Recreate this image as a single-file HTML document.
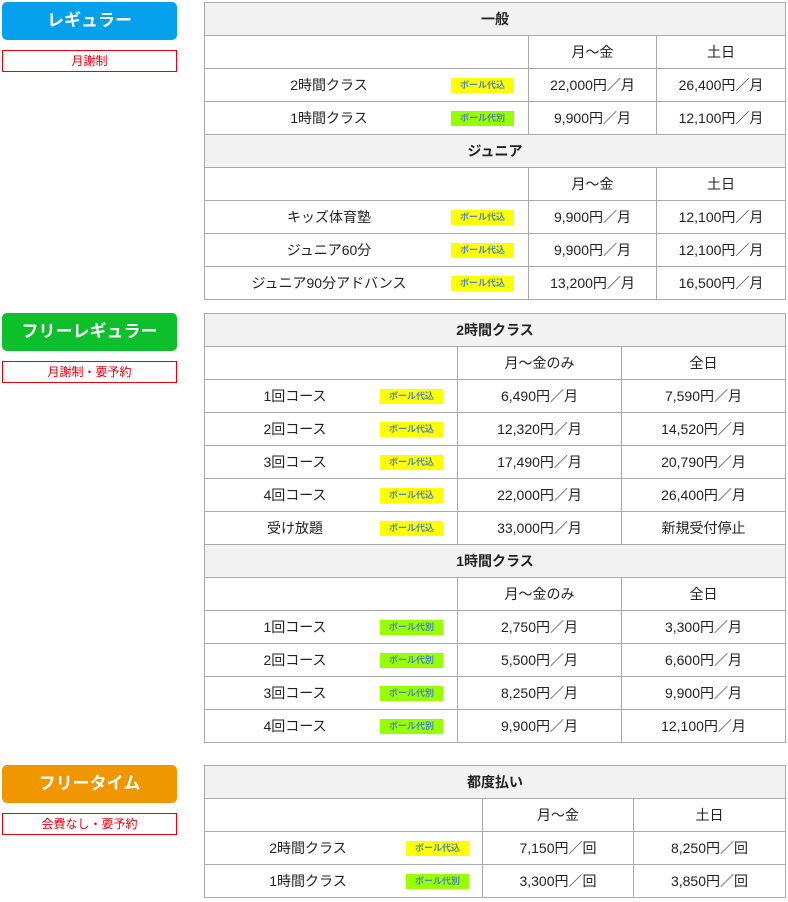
<!DOCTYPE html>
<html><head><meta charset="utf-8"><style>
body{margin:0;width:788px;height:902px;background:#fff;font-family:"Liberation Sans","Noto Sans CJK JP",sans-serif;color:#222;position:relative;overflow:hidden}
.lab{position:absolute;left:2px;width:175px;height:38px;border-radius:5px;color:#fff;font-weight:bold;font-size:17px;text-align:center;line-height:38px}
.sub{position:absolute;left:2px;width:173px;height:20px;border:1px solid #e60012;color:#e60012;font-size:12px;text-align:center;line-height:20px}
table{position:absolute;left:204px;width:582px;border-collapse:collapse;table-layout:fixed;font-size:14px}
td{border:1px solid #aaa;height:32px;padding:0;text-align:center;vertical-align:middle}
td.h{background:#f2f2f2;font-weight:bold}
td.f{position:relative}
.n{position:absolute;top:0;line-height:32px;transform:translateX(-50%);white-space:nowrap}
.b{position:absolute;top:9px;width:63px;height:15px;font-size:9px;font-weight:bold;color:#4a86c8;line-height:15px;text-align:center}
.y{background:#ffff00}.g{background:#99ff00}
</style></head><body>
<div class="lab" style="top:2px;background:#05a0ec">レギュラー</div>
<div class="sub" style="top:50px">月謝制</div>
<div class="lab" style="top:313px;background:#0cbf2b">フリーレギュラー</div>
<div class="sub" style="top:361px">月謝制・要予約</div>
<div class="lab" style="top:765px;background:#ef9600">フリータイム</div>
<div class="sub" style="top:813px">会費なし・要予約</div>

<table style="top:2px"><colgroup><col style="width:324px"><col style="width:128px"><col></colgroup>
<tr><td class="h" colspan="3">一般</td></tr>
<tr><td></td><td>月～金</td><td>土日</td></tr>
<tr><td class="f"><span class="n" style="left:124px">2時間クラス</span><span class="b y" style="left:246px">ボール代込</span></td><td>22,000円／月</td><td>26,400円／月</td></tr>
<tr><td class="f"><span class="n" style="left:124px">1時間クラス</span><span class="b g" style="left:246px">ボール代別</span></td><td>9,900円／月</td><td>12,100円／月</td></tr>
<tr><td class="h" colspan="3">ジュニア</td></tr>
<tr><td></td><td>月～金</td><td>土日</td></tr>
<tr><td class="f"><span class="n" style="left:124px">キッズ体育塾</span><span class="b y" style="left:246px">ボール代込</span></td><td>9,900円／月</td><td>12,100円／月</td></tr>
<tr><td class="f"><span class="n" style="left:124px">ジュニア60分</span><span class="b y" style="left:246px">ボール代込</span></td><td>9,900円／月</td><td>12,100円／月</td></tr>
<tr><td class="f"><span class="n" style="left:124px">ジュニア90分アドバンス</span><span class="b y" style="left:246px">ボール代込</span></td><td>13,200円／月</td><td>16,500円／月</td></tr>
</table>

<table style="top:313px"><colgroup><col style="width:253px"><col style="width:164px"><col></colgroup>
<tr><td class="h" colspan="3">2時間クラス</td></tr>
<tr><td></td><td>月～金のみ</td><td>全日</td></tr>
<tr><td class="f"><span class="n" style="left:90px">1回コース</span><span class="b y" style="left:175px">ボール代込</span></td><td>6,490円／月</td><td>7,590円／月</td></tr>
<tr><td class="f"><span class="n" style="left:90px">2回コース</span><span class="b y" style="left:175px">ボール代込</span></td><td>12,320円／月</td><td>14,520円／月</td></tr>
<tr><td class="f"><span class="n" style="left:90px">3回コース</span><span class="b y" style="left:175px">ボール代込</span></td><td>17,490円／月</td><td>20,790円／月</td></tr>
<tr><td class="f"><span class="n" style="left:90px">4回コース</span><span class="b y" style="left:175px">ボール代込</span></td><td>22,000円／月</td><td>26,400円／月</td></tr>
<tr><td class="f"><span class="n" style="left:90px">受け放題</span><span class="b y" style="left:175px">ボール代込</span></td><td>33,000円／月</td><td>新規受付停止</td></tr>
<tr><td class="h" colspan="3">1時間クラス</td></tr>
<tr><td></td><td>月～金のみ</td><td>全日</td></tr>
<tr><td class="f"><span class="n" style="left:90px">1回コース</span><span class="b g" style="left:175px">ボール代別</span></td><td>2,750円／月</td><td>3,300円／月</td></tr>
<tr><td class="f"><span class="n" style="left:90px">2回コース</span><span class="b g" style="left:175px">ボール代別</span></td><td>5,500円／月</td><td>6,600円／月</td></tr>
<tr><td class="f"><span class="n" style="left:90px">3回コース</span><span class="b g" style="left:175px">ボール代別</span></td><td>8,250円／月</td><td>9,900円／月</td></tr>
<tr><td class="f"><span class="n" style="left:90px">4回コース</span><span class="b g" style="left:175px">ボール代別</span></td><td>9,900円／月</td><td>12,100円／月</td></tr>
</table>

<table style="top:765px"><colgroup><col style="width:278px"><col style="width:151px"><col></colgroup>
<tr><td class="h" colspan="3">都度払い</td></tr>
<tr><td></td><td>月～金</td><td>土日</td></tr>
<tr><td class="f"><span class="n" style="left:103px">2時間クラス</span><span class="b y" style="left:201px">ボール代込</span></td><td>7,150円／回</td><td>8,250円／回</td></tr>
<tr><td class="f"><span class="n" style="left:103px">1時間クラス</span><span class="b g" style="left:201px">ボール代別</span></td><td>3,300円／回</td><td>3,850円／回</td></tr>
</table>
</body></html>
